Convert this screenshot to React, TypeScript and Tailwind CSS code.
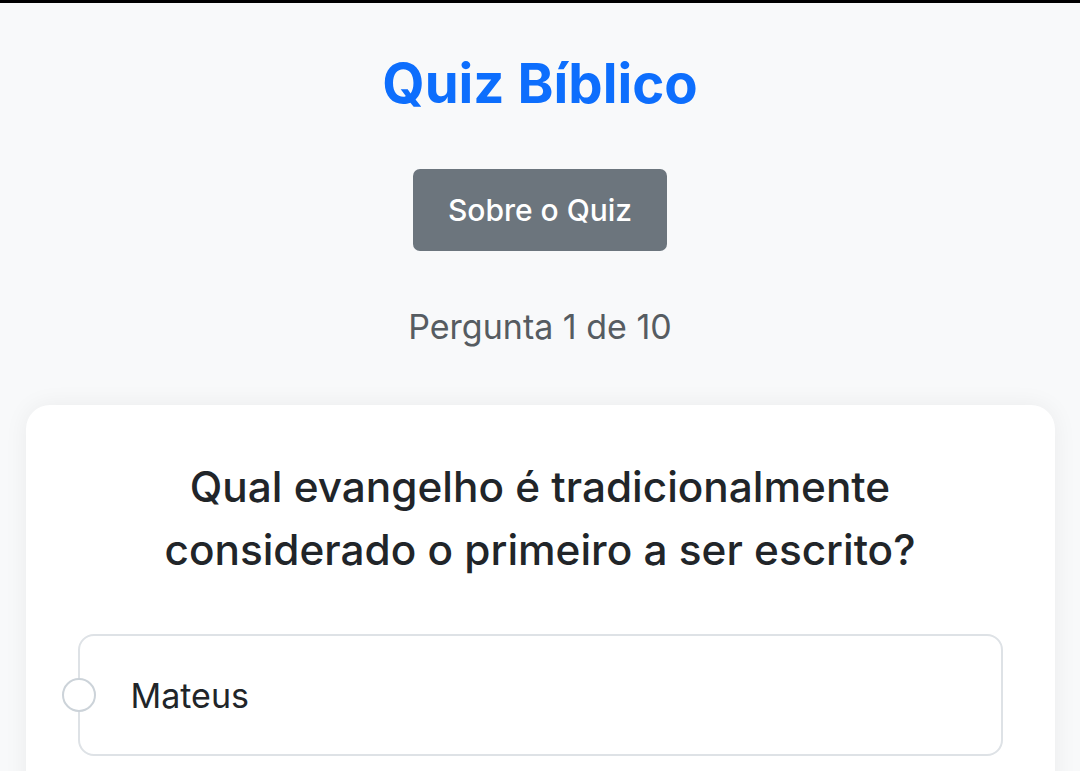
import React from "react";

export default function App() {
  return (
    <div
      className="min-h-[771px] bg-[#f8f9fa] flex flex-col items-center overflow-hidden"
      style={{ fontFamily: "Inter, 'Noto Sans', sans-serif" }}
    >
      <div className="h-[3px] w-full bg-black" />
      <h1 className="mt-[47px] text-[54.5px] leading-[67px] font-bold text-[#0d6efd]">
        Quiz Bíblico
      </h1>
      <button className="mt-[52px] h-[82px] w-[254px] rounded-[7px] bg-[#6c757d] text-[30px] font-medium text-white">
        Sobre o Quiz
      </button>
      <p className="mt-[53px] text-[34px] leading-[45px] text-[#565c61]">
        Pergunta 1 de 10
      </p>
      <div className="mt-[56px] w-[1029px] rounded-t-[24px] bg-white px-[52px] pt-[50px] pb-10 shadow-[0_0_24px_rgba(0,0,0,0.06)]">
        <h2 className="text-center text-[42.3px] leading-[63px] font-medium text-[#212529]">
          Qual evangelho é tradicionalmente
          <br />
          considerado o primeiro a ser escrito?
        </h2>
        <div className="mt-[53px] flex flex-col gap-4">
          <label className="relative flex h-[122px] items-center rounded-[16px] border-2 border-[#dee2e6] pl-[51px]">
            <span className="absolute left-[-18px] top-1/2 h-[34px] w-[34px] -translate-y-1/2 rounded-full border-2 border-[#ccd3d9] bg-white" />
            <span className="text-[34px] text-[#212529]">Mateus</span>
          </label>
        </div>
      </div>
    </div>
  );
}
